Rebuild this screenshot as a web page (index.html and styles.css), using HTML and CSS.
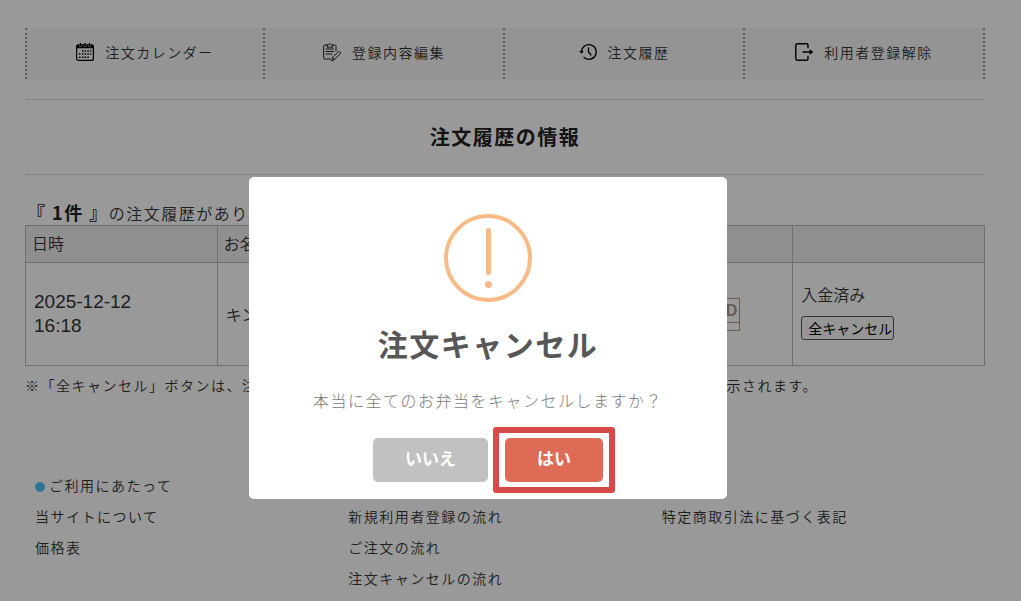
FILE: index.html
```html
<!DOCTYPE html>
<html lang="ja">
<head>
<meta charset="utf-8">
<meta name="viewport" content="width=device-width, initial-scale=1">
<title>注文履歴の情報</title>
<link rel="stylesheet" href="styles.css">
</head>
<body>
<div class="page">
  <nav>
    <ul class="menu">
      <li><a href="#">
        <svg class="icon" viewBox="0 0 18 18" aria-hidden="true">
          <rect x="0.6" y="1.8" width="16.8" height="15.6" rx="2" fill="none" stroke="#000" stroke-width="1.2"/>
          <path d="M0.5 5.2V3.6Q0.5 1.6 2.5 1.6H15.5Q17.5 1.6 17.5 3.6V5.2Z"/>
          <path d="M4.5 0V3M9 0V3M13.5 0V3" stroke="#000" stroke-width="1.4"/>
          <path d="M3.3 1V3.6H5.7V1M7.8 1V3.6H10.2V1M12.3 1V3.6H14.7V1" fill="none" stroke="#999" stroke-width=".7"/>
          <path d="M6 8H7.500M8.700 8H10.200M11.400 8H12.900M14.100 8H15.300M3 11H4.500M6 11H7.500M8.700 11H10.200M11.400 11H12.900M14.100 11H15.300M3 14.200H4.500M6 14.200H7.500M8.700 14.200H10.200M11.400 14.200H12.900" stroke="#000" stroke-width="1.500" fill="none"/>
        </svg>
        <span>注文カレンダー</span></a></li>
      <li><a href="#">
        <svg class="icon" viewBox="0 0 18 18" aria-hidden="true" fill="none" stroke="#222" stroke-width="1" stroke-linejoin="round" stroke-linecap="round">
          <path d="M4 2H1.800Q.6 2 .6 3.200V14.800Q.6 16 1.800 16H7.500M9.500 2H11.800Q13 2 13 3.200V8"/>
          <path d="M4 3.800V1.800H5.200Q6.800-.8 8.400 1.800H9.600V3.800Z"/>
          <path d="M3 6H10.500M3 8.500H10.500M3 11H9"/>
          <path d="M8.800 17.500L9.600 14.500L15.500 8.600Q16.500 8 17.300 8.900Q18 9.800 17.300 10.600L11.500 16.600ZM9.600 14.500L11.500 16.600"/>
        </svg>
        <span>登録内容編集</span></a></li>
      <li><a href="#">
        <svg class="icon" viewBox="0 0 18 18" aria-hidden="true" fill="none" stroke="#000" stroke-width="1.300" stroke-linecap="round">
          <path d="M2.500 9A7.400 7.400 0 1 1 5 14.500"/>
          <path d="M9.500 5V9L12 12"/>
          <path d="M.2 8H4.800L2.500 10.800Z" fill="#000" stroke="none"/>
        </svg>
        <span>注文履歴</span></a></li>
      <li><a href="#">
        <svg class="icon" viewBox="0 0 18 18" aria-hidden="true" fill="none" stroke="#000" stroke-width="1.400" stroke-linecap="round" stroke-linejoin="round">
          <path d="M13 4.500V2.200Q13 .8 11.600 .8H2.200Q.8 .8 .8 2.200V15.800Q.8 17.200 2.200 17.200H11.600Q13 17.200 13 15.800V13.500"/>
          <path d="M8 9H17"/>
          <path d="M15 6.800L17.800 9L15 11.200Z" fill="#000" stroke-width=".6"/>
        </svg>
        <span>利用者登録解除</span></a></li>
    </ul>
  </nav>

  <h1 class="heading">注文履歴の情報</h1>

  <main>
    <p class="count"><strong>『 1件 』</strong>の注文履歴があり</p>
    <table class="orders">
      <thead>
        <tr><th>日時</th><th>お名</th><th></th><th></th><th></th></tr>
      </thead>
      <tbody>
        <tr>
          <td class="date">2025-12-12<br>16:18</td>
          <td>キン</td>
          <td></td>
          <td><span class="card">D</span></td>
          <td class="status">入金済み<br><button class="cancel-all" type="button">全キャンセル</button></td>
        </tr>
      </tbody>
    </table>
    <p class="note"><span>※「全キャンセル」ボタンは、注</span><span>示されます。</span></p>
  </main>

  <footer class="links">
    <ul>
      <li class="topic">ご利用にあたって</li>
      <li><a href="#">当サイトについて</a></li>
      <li><a href="#">価格表</a></li>
    </ul>
    <ul>
      <li><a href="#">新規利用者登録の流れ</a></li>
      <li><a href="#">ご注文の流れ</a></li>
      <li><a href="#">注文キャンセルの流れ</a></li>
    </ul>
    <ul>
      <li><a href="#">特定商取引法に基づく表記</a></li>
    </ul>
  </footer>
</div>

<div class="overlay">
  <div class="modal" role="dialog" aria-modal="true" aria-labelledby="modal-title">
    <svg class="warning" viewBox="0 0 88 88" aria-hidden="true">
      <circle cx="44" cy="44" r="42" fill="none" stroke="#f8bb86" stroke-width="4"/>
      <rect x="42" y="14" width="5" height="47" rx="2" fill="#f8bb86"/>
      <circle cx="44.500" cy="70.500" r="3.500" fill="#f8bb86"/>
    </svg>
    <h2 class="modal-title" id="modal-title">注文キャンセル</h2>
    <p class="message">本当に全てのお弁当をキャンセルしますか？</p>
    <div class="actions">
      <button class="btn btn-no" type="button">いいえ</button>
      <button class="btn btn-yes" type="button">はい</button>
    </div>
  </div>
</div>
</body>
</html>
```
FILE: styles.css
```css
* { box-sizing: border-box; }

body {
  margin: 0;
  background: #fff;
  color: #333;
  font-family: "Noto Sans CJK JP", sans-serif;
  font-size: 15px;
  font-weight: 350;
  letter-spacing: 0.1em;
}

a { color: inherit; text-decoration: none; }
ul { list-style: none; margin: 0; padding: 0; }
p { margin: 0; }

.page { padding: 28px 36px 0 25px; }

.menu {
  display: grid;
  grid-template-columns: repeat(4, 1fr);
  background: #f7f7f7;
  font-size: 14px;
}
.menu li { border-right: 2px dotted #999; }
.menu li:first-child { border-left: 2px dotted #999; }
.menu a {
  display: flex;
  align-items: center;
  justify-content: center;
  gap: 11px;
  height: 51px;
  padding-bottom: 3px;
}
.icon { width: 18px; height: 18px; overflow: visible; }

.heading {
  margin: 20px 0 0;
  padding: 22px 0;
  border-top: 1px solid #ddd;
  border-bottom: 1px solid #ddd;
  color: #222;
  font-size: 20px;
  line-height: 30px;
  text-align: center;
}

.count { margin-top: 25px; padding-left: 2px; font-size: 16px; line-height: 24px; }
.count strong { font-size: 18px; color: #222; }

.orders {
  width: 100%;
  border-collapse: collapse;
  table-layout: fixed;
  font-size: 16px;
  line-height: 24px;
  letter-spacing: 0;
}
.orders th, .orders td { border: 1px solid #bbb; text-align: left; }
.orders th { padding: 5px 6px 7px; height: 37px; background: #eee; font-weight: 350; }
.orders td { padding: 0 8px; height: 103px; }
.orders .date { font-family: "Liberation Sans", sans-serif; font-size: 19px; }
.orders .status { padding-bottom: 6px; }

.card {
  display: block;
  width: 60px;
  margin-left: 71px;
  height: 33px;
  border: 1px solid #b09a88;
  background: linear-gradient(#b09a88, #b09a88) 0 23px / 100% 1px no-repeat;
  color: #b09a88;
  font: 700 16px/24px "Liberation Sans", sans-serif;
  text-align: right;
  padding-right: 2px;
}

.cancel-all {
  height: 24px;
  margin-top: 10px;
  padding: 0 1px 0 6px;
  border: 1px solid #555;
  border-radius: 3px;
  background: #fafafa;
  color: #000;
  font: 14px/20px "Noto Sans CJK JP", sans-serif;
}

.note {
  display: flex;
  justify-content: space-between;
  margin-top: 7px;
  padding-right: 167px;
  font-size: 14px;
  line-height: 24px;
  white-space: nowrap;
}

.links {
  display: grid;
  grid-template-columns: repeat(3, 1fr);
  margin-top: 73px;
  padding: 0 10px;
  font-size: 14px;
  line-height: 31px;
}
.links ul + ul { margin-top: 31px; }
.topic { display: flex; align-items: center; gap: 4px; }
.topic::before {
  content: "";
  width: 10px;
  height: 10px;
  margin-top: 3px;
  border-radius: 50%;
  background: #4dc3fa;
}

.overlay {
  position: fixed;
  inset: 0;
  display: flex;
  align-items: flex-start;
  justify-content: center;
  padding: 177px 45px 0 0;
  background: rgba(0, 0, 0, 0.4);
}
.modal {
  display: flex;
  flex-direction: column;
  align-items: center;
  width: 478px;
  max-width: 100%;
  padding: 37px 17px 17px;
  border-radius: 5px;
  background: #fff;
}
.warning { width: 88px; height: 88px; }
.modal-title {
  margin: 21px 0 0;
  color: #575757;
  font-size: 30px;
  line-height: 40px;
}
.message {
  margin-top: 25px;
  color: #797979;
  font-size: 16px;
  font-weight: 300;
  line-height: 24px;
}
.actions { display: flex; gap: 17px; margin-top: 26px; }
.btn {
  position: relative;
  height: 44px;
  padding: 0 32px 4px;
  border: 0;
  border-radius: 5px;
  color: #fff;
  font: 700 17px/24px "Noto Sans CJK JP", sans-serif;
}
.btn-no { background: #c1c1c1; }
.btn-yes { background: #dd6b55; }
.btn-yes::after {
  content: "";
  position: absolute;
  inset: -11px -12px;
  border: 6px solid #d64a4a;
  border-radius: 3px;
}
```
